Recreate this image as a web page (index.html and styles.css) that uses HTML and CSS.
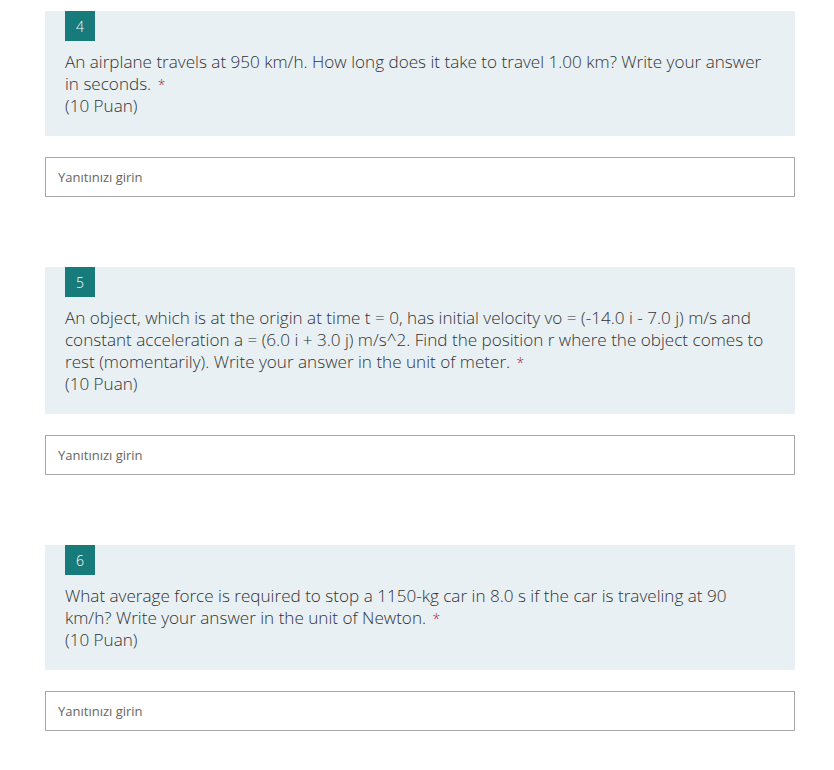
FILE: index.html
```html
<!DOCTYPE html>
<html lang="tr">

<head>
    <meta charset="UTF-8">
    <meta name="viewport" content="width=device-width, initial-scale=1.0">
    <title>Form</title>

    <link rel="stylesheet" href="styles.css">
</head>

<body>
    <div class="form">
        <div class="soru">
            <div class="kart">
                <span class="no">4</span>
                <p class="metin">An airplane travels at 950 km/h. How long does it take to travel 1.00 km? Write your answer<br>in seconds. <span class="yildiz">*</span></p>
                <p class="puan">(10 Puan)</p>
            </div>
            <input class="cevap" type="text" placeholder="Yanıtınızı girin">
        </div>

        <div class="soru">
            <div class="kart">
                <span class="no">5</span>
                <p class="metin">An object, which is at the origin at time t = 0, has initial velocity vo = (-14.0 i - 7.0 j) m/s and<br>constant acceleration a = (6.0 i + 3.0 j) m/s^2. Find the position r where the object comes to<br>rest (momentarily). Write your answer in the unit of meter. <span class="yildiz">*</span></p>
                <p class="puan">(10 Puan)</p>
            </div>
            <input class="cevap" type="text" placeholder="Yanıtınızı girin">
        </div>

        <div class="soru">
            <div class="kart">
                <span class="no">6</span>
                <p class="metin">What average force is required to stop a 1150-kg car in 8.0 s if the car is traveling at 90<br>km/h? Write your answer in the unit of Newton. <span class="yildiz">*</span></p>
                <p class="puan">(10 Puan)</p>
            </div>
            <input class="cevap" type="text" placeholder="Yanıtınızı girin">
        </div>
    </div>
</body>
</html>
```

FILE: styles.css
```css
body { margin: 0; background: #fff; font-family: "Open Sans", sans-serif; color: #333; }
p { margin: 0; }

.form {
    width: 750px;
    margin-left: 45px;
    padding-top: 11px;
    display: flex;
    flex-direction: column;
    gap: 70px;
}

.soru { display: flex; flex-direction: column; gap: 21px; }

.kart {
    background-color: #e8f0f3;
    padding: 0 10px 19px 20px;
}

.no {
    display: flex;
    width: 30px;
    height: 30px;
    background-color: #177b7b;
    color: #fff;
    font-size: 14px;
    font-weight: 300;
    justify-content: center;
    align-items: center;
    margin-bottom: 10px;
}

.metin, .puan { font-size: 17.1px; line-height: 22px; font-weight: 300; white-space: nowrap; }
.yildiz { color: #a4262c; font-size: 14px; line-height: 1; margin-left: 2px; }

.cevap {
    box-sizing: border-box;
    width: 100%;
    height: 40px;
    border: 1px solid #a8a8a8;
    padding: 0 12px;
    font-family: "Open Sans", sans-serif;
    font-size: 13px;
    outline: none;
}
.cevap::placeholder { color: #666; }
```
